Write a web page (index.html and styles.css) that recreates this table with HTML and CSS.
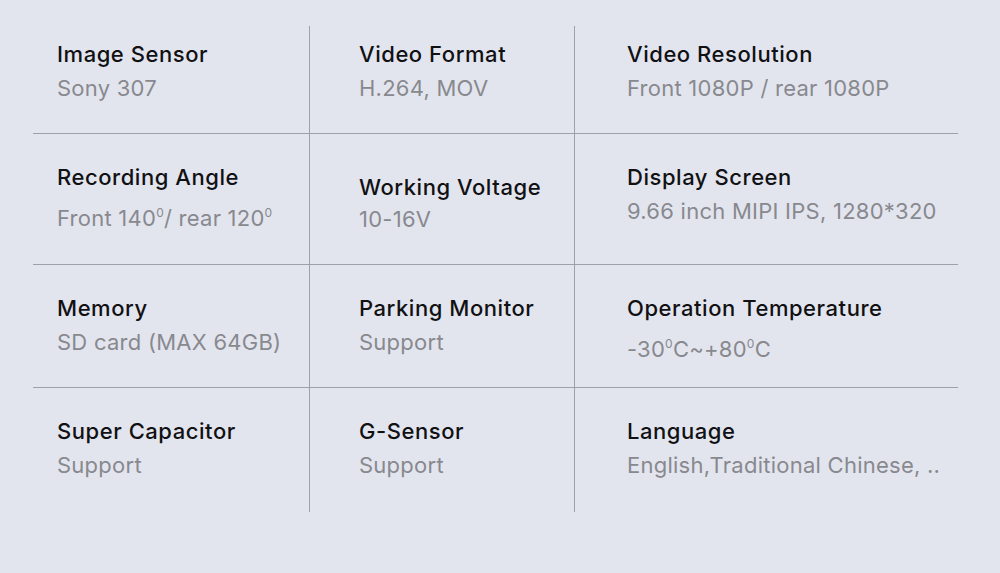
FILE: index.html
```html
<!DOCTYPE html>
<html>
<head>
<meta charset="utf-8">
<link rel="stylesheet" href="styles.css">
</head>
<body>
<div class="specs">
  <div class="cell c1 r1"><div class="t">Image Sensor</div><div class="v">Sony 307</div></div>
  <div class="cell c2 r1"><div class="t">Video Format</div><div class="v">H.264, MOV</div></div>
  <div class="cell c3 r1"><div class="t">Video Resolution</div><div class="v">Front 1080P / rear 1080P</div></div>

  <div class="cell c1"><div class="t">Recording Angle</div><div class="v v-wide">Front 140<sup class="deg">0</sup>/ rear 120<sup class="deg">0</sup></div></div>
  <div class="cell c2 low"><div class="t">Working Voltage</div><div class="v v-tight">10-16V</div></div>
  <div class="cell c3"><div class="t">Display Screen</div><div class="v">9.66 inch MIPI IPS, 1280*320</div></div>

  <div class="cell c1"><div class="t">Memory</div><div class="v">SD card (MAX 64GB)</div></div>
  <div class="cell c2"><div class="t">Parking Monitor</div><div class="v">Support</div></div>
  <div class="cell c3"><div class="t">Operation Temperature</div><div class="v v-wide">-30<sup class="deg">0</sup>C~+80<sup class="deg">0</sup>C</div></div>

  <div class="cell c1 last"><div class="t">Super Capacitor</div><div class="v">Support</div></div>
  <div class="cell c2 last"><div class="t">G-Sensor</div><div class="v">Support</div></div>
  <div class="cell c3 last"><div class="t">Language</div><div class="v">English,Traditional Chinese, ..</div></div>
</div>
</body>
</html>
```

FILE: styles.css
```css
html, body {
  margin: 0;
  padding: 0;
  background: #e3e5ee;
}
body {
  width: 1000px;
  height: 573px;
  overflow: hidden;
  font-family: Inter, "Noto Sans", sans-serif;
}
.specs {
  margin: 26px 0 0 33px;
  width: 925px;
  display: grid;
  grid-template-columns: 276px 265px 384px;
  grid-template-rows: 108px 131px 123px 124px;
}
.cell {
  border-bottom: 1px solid #9fa1a8;
  padding-top: 26px;
  box-sizing: border-box;
}
.cell.last { border-bottom: none; }
.cell.r1 { padding-top: 11px; }
.cell.low { padding-top: 36px; }
.c1 { padding-left: 24px; }
.c2 { padding-left: 49px; border-left: 1px solid #9fa1a8; }
.c3 { padding-left: 52px; border-left: 1px solid #9fa1a8; }
.t {
  font-size: 22px;
  font-weight: 500;
  color: #111114;
  line-height: 34px;
  letter-spacing: 0.55px;
  white-space: nowrap;
}
.v {
  font-size: 22px;
  font-weight: 400;
  color: #88898e;
  line-height: 34px;
  letter-spacing: 0.25px;
  white-space: nowrap;
}
.v-wide { margin-top: 7px; }
.v-tight { margin-top: -2px; }
.deg {
  font-size: 12px;
  line-height: 0;
  vertical-align: 9px;
}
```
